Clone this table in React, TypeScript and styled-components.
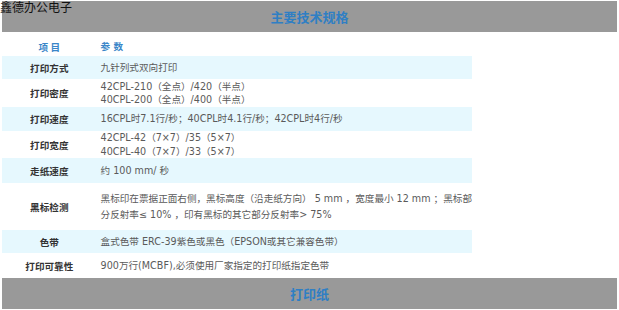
import styled, { createGlobalStyle } from "styled-components";

const GlobalStyle = createGlobalStyle`
    body {
        margin: 0;
        background: #ffffff;
    }
`;

const Page = styled.div`
    position: relative;
    width: 619px;
    height: 310px;
    padding: 1px 2px 0 2px;
    box-sizing: border-box;
    overflow: hidden;
`;

const SiteName = styled.div`
    position: absolute;
    left: 0;
    top: 1px;
    font-family: "Liberation Serif", "Noto Sans CJK SC", serif;
    font-size: 12px;
    line-height: 14px;
    color: #111;
`;

const Bar = styled.div<{ $top?: number }>`
    height: 31px;
    margin-top: ${(p) => p.$top ?? 0}px;
    background: #999999;
    display: flex;
    align-items: center;
    justify-content: center;
    font-family: "Noto Sans CJK SC", sans-serif;
    font-size: 13px;
    font-weight: 700;
    color: #2f7fc4;
`;

const SpecTable = styled.table`
    width: 470px;
    margin-top: 5px;
    border-collapse: collapse;
    font-size: 9.6px;
`;

const Row = styled.tr<{ $shaded?: boolean; $h: number }>`
    height: ${(p) => p.$h}px;
    background: ${(p) => (p.$shaded ? "#e6f8fe" : "transparent")};
`;

const LabelCell = styled.td<{ $head?: boolean }>`
    width: 96px;
    padding: 0;
    text-align: center;
    vertical-align: middle;
    white-space: nowrap;
    line-height: 14px;
    font-family: "Noto Sans CJK SC", sans-serif;
    font-weight: 700;
    color: ${(p) => (p.$head ? "#3a86c8" : "#333333")};
`;

const ValueCell = styled.td<{ $head?: boolean }>`
    padding: 0 0 0 4px;
    vertical-align: middle;
    white-space: nowrap;
    line-height: 14px;
    font-weight: ${(p) => (p.$head ? 700 : 400)};
    font-family: "DejaVu Sans", "Noto Sans CJK SC", sans-serif;
    color: ${(p) => (p.$head ? "#3a86c8" : "#5a5a5a")};
`;

const Line = styled.div<{ $lh: number }>`
    height: ${(p) => p.$lh}px;
    line-height: ${(p) => p.$lh}px;
    overflow: visible;
`;

type Spec = { label: string; lines: string[]; h: number; lh?: number };

const specs: Spec[] = [
    { label: "打印方式", lines: ["九针列式双向打印"], h: 23 },
    { label: "打印密度", lines: ["42CPL-210（全点）/420（半点）", "40CPL-200（全点）/400（半点）"], h: 28 },
    { label: "打印速度", lines: ["16CPL时7.1行/秒；40CPL时4.1行/秒；42CPL时4行/秒"], h: 24 },
    { label: "打印宽度", lines: ["42CPL-42（7×7）/35（5×7）", "40CPL-40（7×7）/33（5×7）"], h: 27 },
    { label: "走纸速度", lines: ["约 100 mm/ 秒"], h: 25 },
    {
        label: "黑标检测",
        lines: [
            "黑标印在票据正面右侧，黑标高度（沿走纸方向） 5 mm ，宽度最小 12 mm ；黑标部",
            "分反射率≤ 10% ，印有黑标的其它部分反射率> 75%",
        ],
        h: 47,
        lh: 16,
    },
    { label: "色带", lines: ["盒式色带 ERC-39紫色或黑色（EPSON或其它兼容色带）"], h: 23 },
    { label: "打印可靠性", lines: ["900万行(MCBF),必须使用厂家指定的打印纸指定色带"], h: 25 },
];

export default function App() {
    return (
        <Page>
            <GlobalStyle />
            <SiteName>鑫德办公电子</SiteName>
            <Bar>主要技术规格</Bar>
            <SpecTable>
                <tbody>
                    <Row $h={19}>
                        <LabelCell $head>项 目</LabelCell>
                        <ValueCell $head>参 数</ValueCell>
                    </Row>
                    {specs.map((s, i) => (
                        <Row key={s.label} $h={s.h} $shaded={i % 2 === 0}>
                            <LabelCell>{s.label}</LabelCell>
                            <ValueCell>
                                {s.lines.map((l, j) => (
                                    <Line key={j} $lh={s.lh ?? (s.lines.length > 1 ? 13.5 : 14)}>
                                        {l}
                                    </Line>
                                ))}
                            </ValueCell>
                        </Row>
                    ))}
                </tbody>
            </SpecTable>
            <Bar>打印纸</Bar>
        </Page>
    );
}
